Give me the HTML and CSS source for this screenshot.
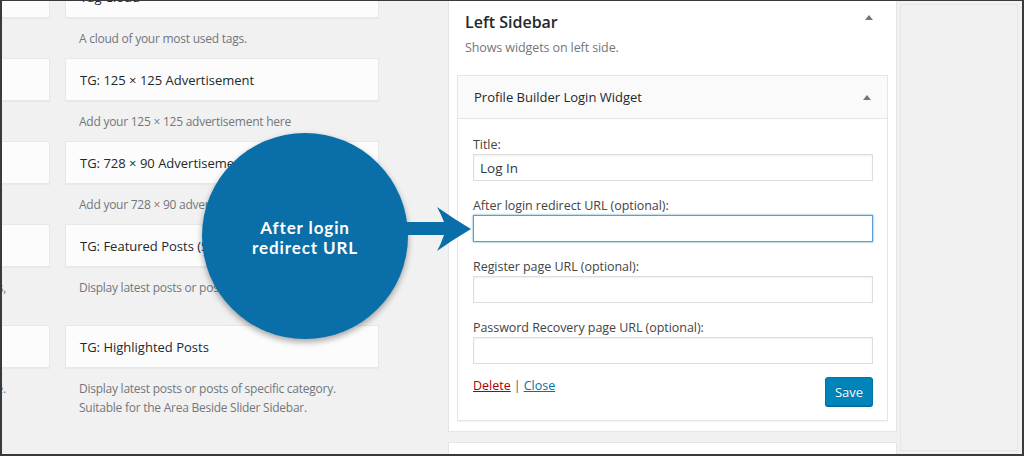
FILE: index.html
```html
<!DOCTYPE html>
<html lang="en">
<head>
<meta charset="utf-8">
<title>Widgets</title>
<link rel="stylesheet" href="styles.css">
</head>
<body>
<div class="frame">
  <div class="cols">
    <div class="col col-a">
      <div class="card">Tag Cloud Widget</div>
      <div class="desc">A list of posts</div>
      <div class="card">Recent Posts</div>
      <div class="desc">Arbitrary text</div>
      <div class="card">Text</div>
      <div class="desc">Your recent posts</div>
      <div class="card">Recent Comments</div>
      <div class="desc desc-tall desc-end">Display your latest posts with dates,</div>
      <div class="card">TG: Latest Posts</div>
      <div class="desc desc-end">Show posts on the front page.</div>
    </div>
    <div class="col col-b">
      <div class="card">Tag Cloud</div>
      <div class="desc">A cloud of your most used tags.</div>
      <div class="card">TG: 125 × 125 Advertisement</div>
      <div class="desc">Add your 125 × 125 advertisement here</div>
      <div class="card">TG: 728 × 90 Advertisement</div>
      <div class="desc">Add your 728 × 90 advertisement here</div>
      <div class="card">TG: Featured Posts (Style 1)</div>
      <div class="desc desc-tall">Display latest posts or posts of specific category.</div>
      <div class="card">TG: Highlighted Posts</div>
      <div class="desc">Display latest posts or posts of specific category.<br>Suitable for the Area Beside Slider Sidebar.</div>
    </div>
    <div class="col col-c">
      <div class="sidebar">
        <div class="sb-head">
          <div class="sb-title-row">
            <h2 class="sb-title">Left Sidebar</h2>
            <span class="tri tri-sb"></span>
          </div>
          <p class="sb-desc">Shows widgets on left side.</p>
        </div>
        <div class="widget">
          <div class="w-head">
            <span class="w-title">Profile Builder Login Widget</span>
            <span class="tri"></span>
          </div>
          <div class="w-body">
            <label class="lbl">Title:</label>
            <input class="inp" type="text" value="Log In">
            <label class="lbl">After login redirect URL (optional):</label>
            <input class="inp focus" type="text" value="">
            <label class="lbl">Register page URL (optional):</label>
            <input class="inp" type="text" value="">
            <label class="lbl">Password Recovery page URL (optional):</label>
            <input class="inp last" type="text" value="">
            <div class="actions">
              <div class="links"><a class="del">Delete</a><span class="sep">|</span><a class="close">Close</a></div>
              <button class="save" type="button">Save</button>
            </div>
          </div>
        </div>
      </div>
      <div class="sidebar next"></div>
    </div>
    <div class="col col-d"></div>
  </div>
  <div class="bubble">After login<br>redirect URL</div>
  <svg class="arrow" width="90" height="60" viewBox="0 0 90 60" aria-hidden="true">
    <path d="M0,22 L54,22 Q51,14 47,7 Q64,19 81,29 Q64,39 47,51 Q51,44 54,35 L0,35 Z" fill="#0a6ea8"/>
  </svg>
</div>
</body>
</html>
```

FILE: styles.css
```css
* { box-sizing: border-box; }

body {
  margin: 0;
  background: #f1f1f1;
  font-family: "Open Sans", "Noto Sans", sans-serif;
}

.frame {
  position: relative;
  width: 1024px;
  height: 456px;
  overflow: hidden;
  background: #f1f1f1;
  border-style: solid;
  border-color: #3a3a3a;
  border-width: 1px 2px 2px 2px;
}

.cols {
  display: flex;
  align-items: flex-start;
}

.col { flex: none; }

.col-a, .col-b { margin-top: -26px; }

.col-a { width: 315px; margin-left: -267px; }
.col-b { width: 314px; margin-left: 15px; }
.col-c { width: 449px; margin-left: 69px; margin-top: -9px; }
.col-d {
  width: 118px;
  height: 447px;
  margin-left: 3px;
  margin-top: 3px;
  border: 1px solid #e6e6e6;
}

.card {
  height: 43px;
  display: flex;
  align-items: center;
  padding: 0 14px;
  background: #fcfcfc;
  border: 1px solid #e8e8e8;
  box-shadow: 0 1px 1px rgba(0,0,0,.03);
  font-size: 13px;
  color: #23282d;
  white-space: nowrap;
}

.desc {
  padding: 11px 14px 10px;
  font-size: 12px;
  letter-spacing: -0.25px;
  line-height: 19px;
  color: #72777c;
  white-space: nowrap;
}

.desc-tall { padding-bottom: 28px; }

.desc-end {
  text-align: right;
  padding-right: 44px;
}

.sidebar {
  background: #fff;
  border: 1px solid #e5e5e5;
  padding: 0 8px 10px;
}

.sidebar.next {
  margin-top: 10px;
  height: 50px;
}

.sb-head { padding: 18px 8px 0; }

.sb-title-row {
  display: flex;
  justify-content: space-between;
  align-items: flex-start;
}

.sb-title {
  margin: 0;
  font-size: 16px;
  line-height: 22px;
  font-weight: 600;
  color: #23282d;
}

.tri {
  width: 0;
  height: 0;
  border-left: 4px solid transparent;
  border-right: 4px solid transparent;
  border-bottom: 5px solid #72777c;
}

.tri-sb { margin-top: 4px; margin-right: 7px; }

.sb-desc {
  margin: 6px 0 0;
  font-size: 12.5px;
  letter-spacing: -0.1px;
  line-height: 18px;
  color: #72777c;
}

.widget {
  margin-top: 18px;
  border: 1px solid #e5e5e5;
  background: #fff;
  box-shadow: 0 1px 1px rgba(0,0,0,.04);
}

.w-head {
  height: 43px;
  display: flex;
  justify-content: space-between;
  align-items: center;
  padding: 0 16px;
  background: #fafafa;
  border-bottom: 1px solid #e5e5e5;
}

.w-title {
  font-size: 13px;
  font-weight: 500;
  color: #23282d;
}

.w-body {
  padding: 17px 14px 14px 15px;
}

.lbl {
  display: block;
  font-size: 12.5px;
  letter-spacing: -0.05px;
  line-height: 18px;
  color: #444;
}

.inp {
  display: block;
  width: 100%;
  height: 27px;
  margin: 0 0 16px;
  padding: 0 6px;
  border: 1px solid #ddd;
  box-shadow: inset 0 1px 2px rgba(0,0,0,.07);
  font-family: inherit;
  font-size: 13.5px;
  color: #32373c;
  background: #fff;
  outline: none;
}

.inp.focus {
  border-color: #5b9dd9;
  box-shadow: 0 0 2px rgba(30,140,190,.8);
}

.inp.last { margin-bottom: 0; }

.actions {
  display: flex;
  justify-content: space-between;
  align-items: flex-start;
  margin-top: 13px;
}

.links {
  font-size: 12.5px;
  line-height: 18px;
  color: #555;
  display: flex;
}

.sep { margin: 0 3px; }

.del { color: #a00; text-decoration: underline; }
.close { color: #0073aa; text-decoration: underline; }

.save {
  height: 29px;
  width: 48px;
  padding: 0;
  font-family: inherit;
  font-size: 13px;
  color: #fff;
  background: #0085ba;
  border: 1px solid #0073aa;
  border-radius: 3px;
  box-shadow: 0 1px 0 #006799;
  text-shadow: 0 -1px 1px #006799;
}

.bubble {
  position: absolute;
  left: 200px;
  top: 132px;
  width: 206px;
  height: 206px;
  padding-top: 4px;
  border-radius: 50%;
  background: #0a6ea8;
  box-shadow: 0 3px 6px rgba(0,0,0,.35);
  display: flex;
  align-items: center;
  justify-content: center;
  text-align: center;
  color: #fff;
  font-family: "Lato", "Open Sans", sans-serif;
  font-weight: 700;
  font-size: 17px;
  letter-spacing: 0.9px;
  line-height: 20px;
}

.arrow {
  position: absolute;
  left: 388px;
  top: 199px;
}
```
